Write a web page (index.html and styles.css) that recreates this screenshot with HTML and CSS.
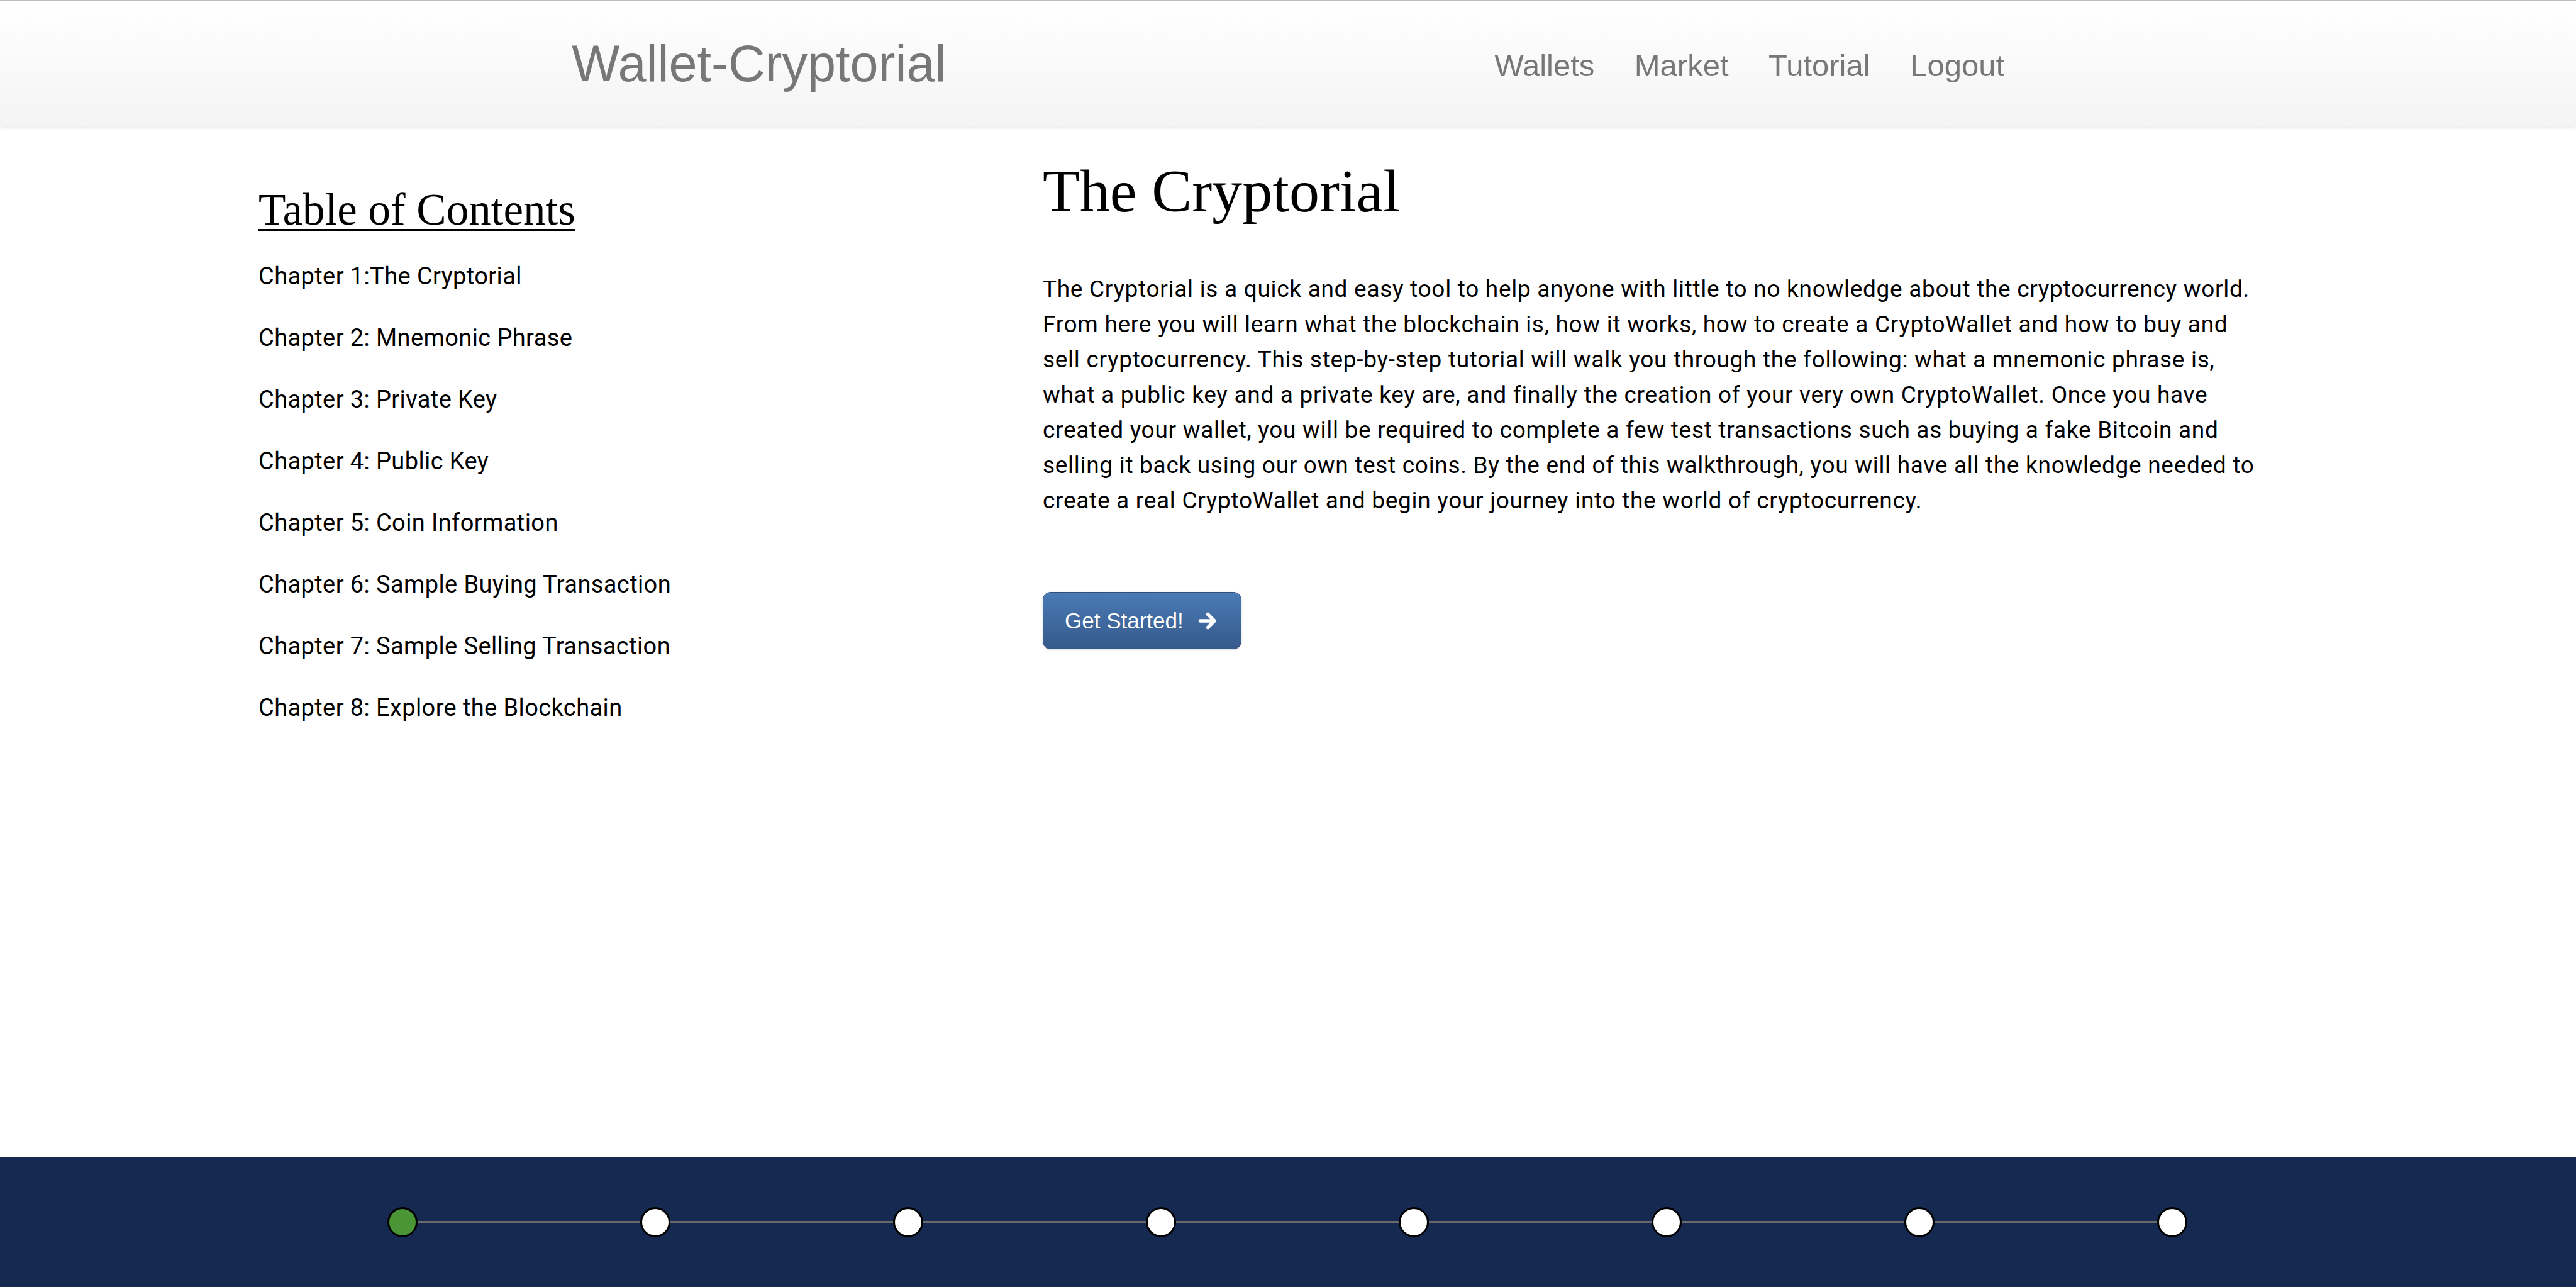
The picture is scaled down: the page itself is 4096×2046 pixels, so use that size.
FILE: index.html
```html
<!DOCTYPE html>
<html lang="en">
<head>
<meta charset="utf-8">
<title>Wallet-Cryptorial</title>
<link rel="stylesheet" href="styles.css">
</head>
<body>
<header class="navbar">
  <div class="nav-inner">
    <a class="brand" href="#">Wallet-Cryptorial</a>
    <nav class="nav-links">
      <a href="#">Wallets</a>
      <a href="#">Market</a>
      <a href="#">Tutorial</a>
      <a href="#">Logout</a>
    </nav>
  </div>
</header>

<main class="main">
  <aside class="toc">
    <h2 class="toc-title">Table of Contents</h2>
    <ul class="toc-list">
      <li>Chapter 1:The Cryptorial</li>
      <li>Chapter 2: Mnemonic Phrase</li>
      <li>Chapter 3: Private Key</li>
      <li>Chapter 4: Public Key</li>
      <li>Chapter 5: Coin Information</li>
      <li>Chapter 6: Sample Buying Transaction</li>
      <li>Chapter 7: Sample Selling Transaction</li>
      <li>Chapter 8: Explore the Blockchain</li>
    </ul>
  </aside>
  <section class="content">
    <h1 class="title">The Cryptorial</h1>
    <p class="intro">The Cryptorial is a quick and easy tool to help anyone with little to no knowledge about the cryptocurrency world.<br>From here you will learn what the blockchain is, how it works, how to create a CryptoWallet and how to buy and<br>sell cryptocurrency. This step-by-step tutorial will walk you through the following: what a mnemonic phrase is,<br>what a public key and a private key are, and finally the creation of your very own CryptoWallet. Once you have<br>created your wallet, you will be required to complete a few test transactions such as buying a fake Bitcoin and<br>selling it back using our own test coins. By the end of this walkthrough, you will have all the knowledge needed to<br>create a real CryptoWallet and begin your journey into the world of cryptocurrency.</p>
    <button class="btn-start" type="button">Get Started!
      <svg class="arrow" viewBox="0 0 31 30" width="31" height="30" aria-hidden="true"><path d="M3.5 15 H26 M15.5 4.5 L26 15 L15.5 25.5" fill="none" stroke="#fff" stroke-width="5.5" stroke-linecap="round" stroke-linejoin="round"/></svg>
    </button>
  </section>
</main>

<footer class="progress">
  <span class="dot done"></span><span class="seg"></span>
  <span class="dot"></span><span class="seg"></span>
  <span class="dot"></span><span class="seg"></span>
  <span class="dot"></span><span class="seg"></span>
  <span class="dot"></span><span class="seg"></span>
  <span class="dot"></span><span class="seg"></span>
  <span class="dot"></span><span class="seg"></span>
  <span class="dot"></span>
</footer>
</body>
</html>
```

FILE: styles.css
```css
html, body {
  margin: 0;
  padding: 0;
}
body {
  min-height: 100vh;
  display: flex;
  flex-direction: column;
  background: #fff;
  color: #000;
  font-family: Roboto, "Noto Sans", sans-serif;
}

/* ---------- navbar ---------- */
.navbar {
  height: 198px;
  border-top: 2px solid #bdbdbd;
  background: linear-gradient(#ffffff, #f4f4f4);
  box-shadow: 0 2px 6px rgba(0,0,0,0.09);
  border-bottom: 1px solid #e2e2e2;
  position: relative;
  z-index: 1;
}
.nav-inner {
  width: 2278px;
  margin: 0 auto;
  display: flex;
  justify-content: space-between;
  align-items: flex-start;
}
.brand {
  font-family: "Liberation Sans", Arial, sans-serif;
  font-size: 81px;
  line-height: 81px;
  color: #777;
  text-decoration: none;
  margin-top: 59px;
}
.nav-links {
  display: flex;
  gap: 63.5px;
  margin-top: 78px;
}
.nav-links a {
  font-family: "Liberation Sans", Arial, sans-serif;
  font-size: 49px;
  line-height: 49px;
  color: #777;
  text-decoration: none;
}

/* ---------- main ---------- */
.main {
  flex: 1;
  display: flex;
  padding-left: 411px;
}
.toc {
  width: 1247px;
  flex: none;
  padding-top: 97px;
}
.toc-title {
  margin: 0;
  font-family: "Liberation Serif", "Times New Roman", serif;
  font-weight: normal;
  font-size: 71px;
  line-height: 70px;
  text-decoration: underline;
  text-decoration-thickness: 3px;
  text-underline-offset: 7px;
}
.toc-list {
  list-style: none;
  margin: 22px 0 0;
  padding: 0;
}
.toc-list li {
  font-size: 38px;
  line-height: 98px;
  height: 98px;
  letter-spacing: 0.4px;
  white-space: nowrap;
}

.content {
  flex: 1;
  padding-top: 55px;
}
.title {
  margin: 0;
  font-family: "Liberation Serif", "Times New Roman", serif;
  font-weight: normal;
  font-size: 96px;
  line-height: 96px;
}
.intro {
  margin: 80px 0 0;
  font-size: 37px;
  line-height: 56px;
  letter-spacing: 0.7px;
  white-space: nowrap;
}
.btn-start {
  margin-top: 117px;
  width: 316px;
  height: 91px;
  display: flex;
  align-items: center;
  gap: 23px;
  padding: 0 0 0 34px;
  border: 1px solid #2f5180;
  border-radius: 12px;
  background: linear-gradient(#4a7ab5, #365a8b);
  box-shadow: inset 0 1px 0 rgba(255,255,255,0.2), 0 1px 3px rgba(0,0,0,0.15);
  color: #fff;
  font-family: "Liberation Sans", Arial, sans-serif;
  font-size: 35px;
  cursor: pointer;
}
.arrow {
  display: block;
}

/* ---------- footer progress ---------- */
.progress {
  height: 206px;
  flex: none;
  background: #152951;
  display: flex;
  align-items: center;
  padding-left: 616px;
}
.dot {
  width: 42px;
  height: 42px;
  border: 3px solid #000;
  border-radius: 50%;
  background: #fff;
  flex: none;
}
.dot.done {
  background: #4a9535;
}
.seg {
  width: 354px;
  height: 4px;
  background: #6a6a6a;
  flex: none;
}
```
